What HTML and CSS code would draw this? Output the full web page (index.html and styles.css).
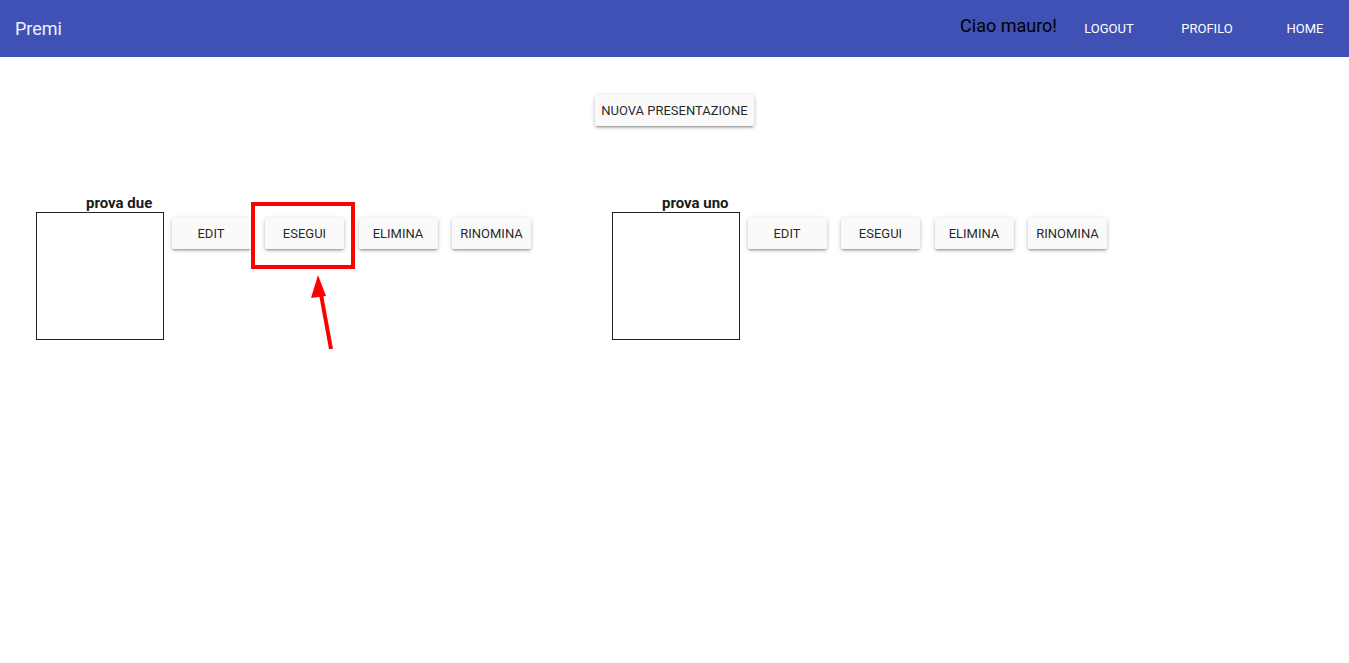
FILE: index.html
```html
<!DOCTYPE html>
<html lang="it">
<head>
<meta charset="utf-8">
<title>Premi</title>
<link rel="stylesheet" href="styles.css">
</head>
<body>
<header class="appbar">
  <div class="brand">Premi</div>
  <div class="spacer"></div>
  <div class="greeting">Ciao mauro!</div>
  <nav class="nav">
    <button class="nav-btn">LOGOUT</button>
    <button class="nav-btn">PROFILO</button>
    <button class="nav-btn">HOME</button>
  </nav>
</header>
<main class="main">
  <div class="new-row">
    <button class="btn btn-new">NUOVA PRESENTAZIONE</button>
  </div>
  <div class="items">
    <section class="item">
      <div class="preview-col">
        <div class="label">prova due</div>
        <div class="preview"></div>
      </div>
      <div class="actions">
        <button class="btn">EDIT</button>
        <button class="btn">ESEGUI</button>
        <button class="btn">ELIMINA</button>
        <button class="btn">RINOMINA</button>
      </div>
    </section>
    <section class="item">
      <div class="preview-col">
        <div class="label">prova uno</div>
        <div class="preview"></div>
      </div>
      <div class="actions">
        <button class="btn">EDIT</button>
        <button class="btn">ESEGUI</button>
        <button class="btn">ELIMINA</button>
        <button class="btn">RINOMINA</button>
      </div>
    </section>
  </div>
</main>
<div class="highlight"></div>
<svg class="arrow" width="40" height="90" viewBox="0 0 40 90">
  <line x1="31" y1="82" x2="20" y2="22" stroke="#ff0000" stroke-width="4"/>
  <polygon points="18,8 26,29 11,31" fill="#ff0000"/>
</svg>
</body>
</html>
```

FILE: styles.css
```css
* { box-sizing: border-box; }
html, body {
  margin: 0;
  padding: 0;
  background: #ffffff;
  font-family: Roboto, "Liberation Sans", Arial, sans-serif;
}
body { position: relative; min-height: 663px; }

.appbar {
  height: 57px;
  background: #3f51b5;
  display: flex;
  align-items: center;
  padding-left: 15px;
}
.brand {
  color: #eef0fb;
  font-size: 18px;
  line-height: 22px;
}
.spacer { flex: 1; }
.greeting {
  color: #000;
  font-size: 18px;
  line-height: 22px;
  margin-top: -6px;
  margin-right: 8px;
}
.nav { display: flex; gap: 10px; }
.nav-btn {
  width: 88px;
  height: 36px;
  border: 0;
  background: transparent;
  color: #fff;
  font-family: inherit;
  font-size: 13px;
  padding: 0;
  cursor: pointer;
}

.main { padding-top: 38px; }
.new-row { display: flex; justify-content: center; }

.btn {
  width: 79px;
  height: 31px;
  border: 0;
  border-radius: 2px;
  background: #fafafa;
  color: rgba(0,0,0,0.87);
  font-family: inherit;
  font-size: 13px;
  padding: 0;
  white-space: nowrap;
  box-shadow: 0 1px 5px 0 rgba(0,0,0,0.2), 0 2px 2px 0 rgba(0,0,0,0.14), 0 3px 1px -2px rgba(0,0,0,0.12);
  cursor: pointer;
}
.btn-new { width: auto; padding: 0 6px; }

.items {
  display: flex;
  padding-left: 36px;
  margin-top: 68px;
}
.item {
  width: 576px;
  display: flex;
  align-items: flex-start;
}
.preview-col { width: 128px; }
.label {
  font-size: 15px;
  font-weight: bold;
  line-height: 18px;
  color: #1a1a1a;
  padding-left: 50px;
  white-space: nowrap;
}
.preview {
  width: 128px;
  height: 128px;
  border: 1px solid #222;
}
.actions {
  display: flex;
  gap: 14.5px;
  margin-left: 7.5px;
  margin-top: 24px;
}

.highlight {
  position: absolute;
  left: 251px;
  top: 202px;
  width: 104px;
  height: 67px;
  border: 4px solid #ff0000;
}
.arrow {
  position: absolute;
  left: 300px;
  top: 267px;
}
```
